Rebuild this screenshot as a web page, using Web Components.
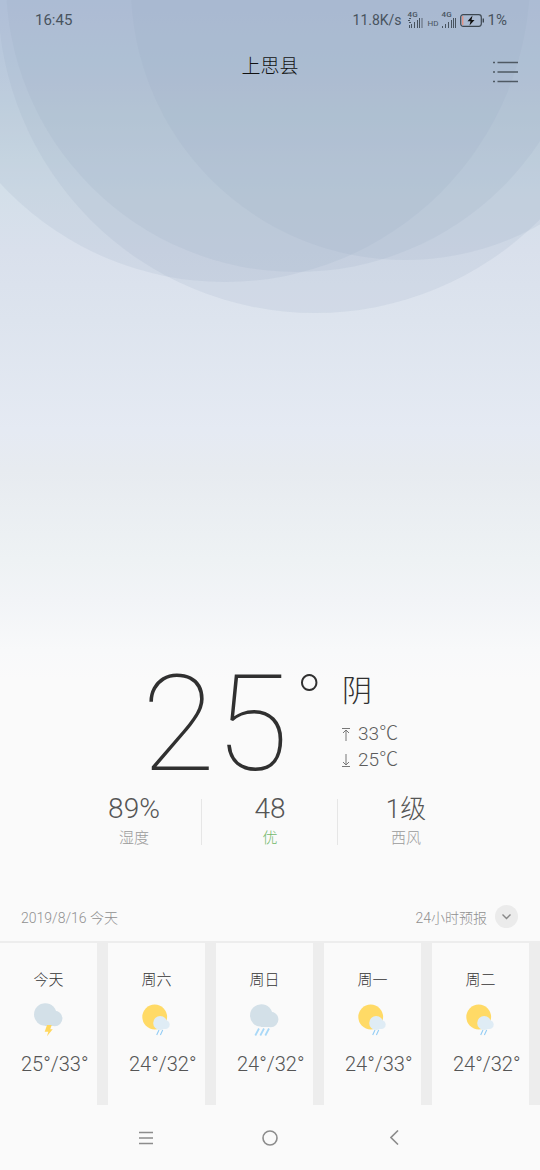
<!DOCTYPE html>
<html lang="zh-CN">
<head>
<meta charset="utf-8">
<meta name="viewport" content="width=device-width, initial-scale=1">
<title>天气</title>
<style>
  body { margin: 0; background: #fafafa; font-family: Roboto, "Noto Sans CJK SC", sans-serif; font-weight: 300; color: #333; }
</style>
</head>
<body>
<weather-app></weather-app>
<script>
const define = (name, html, render) => customElements.define(name, class extends HTMLElement {
  constructor() {
    super();
    this.attachShadow({ mode: 'open' });
  }
  connectedCallback() {
    this.shadowRoot.innerHTML = html;
    if (render) render.call(this, this.shadowRoot);
  }
});

const BUTTON = 'button{appearance:none;border:0;padding:0;margin:0;background:none;color:inherit;font:inherit;display:grid;place-items:center;cursor:pointer}svg{display:block}';

define('sky-backdrop', `
<style>
  :host { display: block; position: absolute; inset: 0; z-index: -1; overflow: hidden;
    background: linear-gradient(#bbcae1 0, #c0cfe1 60px, #c5d4e2 100px, #cedce6 160px, #d3dfe9 190px, #d9e0ec 250px, #dde4ee 320px, #e5eaf3 430px, #e7ebf0 470px, #eef2f4 560px, #f2f4f7 600px, #f8f9fa 650px, #fafafa 680px); }
  svg { display: block; width: 100%; }
</style>
<svg viewBox="0 0 540 330" fill="#98aec2" fill-opacity=".17" aria-hidden="true">
  <circle cx="225" cy="-23" r="305"/><circle cx="315" cy="-4" r="317"/>
  <circle cx="297" cy="-19" r="291"/><circle cx="405" cy="-14" r="274"/>
</svg>`);

define('status-bar', `
<style>
  :host { display: flex; justify-content: space-between; align-items: center; height: 40px; padding: 0 33px 0 35px; font-size: 15px; font-weight: 400; color: #48535e; }
  .right { display: flex; align-items: center; gap: 3px; }
  .speed { font-size: 14px; margin-right: 3px; }
  .cell { display: flex; align-items: flex-end; }
  .hd { font-size: 8px; line-height: 9px; margin: 0 3px 0 2px; }
  .sig { display: grid; justify-items: start; }
  .sig span { font-size: 8px; line-height: 6px; font-weight: 500; }
  svg { display: block; }
</style>
<span>16:45</span>
<div class="right">
  <span class="speed">11.8K/s</span>
  <div class="cell"><div class="sig"><span>4G</span>
    <svg width="15" height="10" fill="#48535e"><path d="M1 0h2v1H1zM0 2h2v1H0zM1 4h2v1H1zM1 7h1v3H1zM3 6h1v4H3zM6 4h1v6H6zM9 2h1v8H9zM11 0h1v10h-1z"/><path d="M13 0h2v10h-2z" opacity=".4"/></svg></div></div>
  <div class="cell"><span class="hd">HD</span><div class="sig"><span>4G</span>
    <svg width="15" height="10" fill="#48535e"><path d="M0 8h1v2H0zM3 6h1v4H3zM6 4h1v6H6zM9 2h1v8H9zM11 0h1v10h-1zM13 0h1v10h-1z"/></svg></div></div>
  <div class="cell">
    <svg width="25" height="13" fill="none"><rect x=".7" y=".7" width="20.6" height="11.6" rx="2.5" stroke="#3e4852" stroke-width="1.2"/><path d="M2.700 2v9" stroke="#e39488" stroke-width="1.4"/><path d="M12.500 1.500 7.500 7.200h3l-1 4.300 5-5.500h-3z" fill="#111"/><path d="M23.300 4.500v4" stroke="#3e4852" stroke-width="1.4"/></svg></div>
  <span>1%</span>
</div>`);

define('title-bar', `
<style>${BUTTON}
  :host { display: grid; grid-template-columns: 1fr auto 1fr; height: 52px; padding: 0 22px; }
  h1 { margin: 2px 0 0; align-self: center; font-size: 19px; line-height: 28px; font-weight: 300; color: #111; }
  button { grid-column: 3; justify-self: end; align-self: end; height: 40px; }
</style>
<i></i><h1><slot></slot></h1>
<button aria-label="城市列表"><svg width="25" height="22" stroke="#4f5963" stroke-width="1.4"><path d="M0 1.500h2M4.500 1.500h20.500M0 11h2M4.500 11h20.500M0 20.500h2M4.500 20.500h20.500"/></svg></button>`);

define('current-weather', `
<style>
  :host { display: flex; justify-content: center; align-items: flex-start; }
  .temp { display: flex; font-weight: 100; font-size: 134px; line-height: 136px; color: #303030; }
  .deg { font-size: 72px; line-height: 60px; margin-left: 7px; padding-top: 15px; }
  .side { margin-left: 19px; padding-top: 12px; }
  h2 { margin: 0 0 8px; font-size: 30px; line-height: 44px; font-weight: 300; color: #303030; }
  .side p { display: flex; align-items: center; gap: 8px; margin: 0; font-size: 19px; line-height: 26px; color: #5c5c5c; }
  svg { display: block; }
</style>
<div class="temp"><span>25</span><span class="deg">°</span></div>
<div class="side">
  <h2>阴</h2>
  <p><svg width="8" height="13" fill="none" stroke="#777"><path d="M0 .5h8M4 13V2M1 5l3-3 3 3"/></svg>33℃</p>
  <p><svg width="8" height="13" fill="none" stroke="#777"><path d="M0 12.500h8M4 0v11M1 8l3 3 3-3"/></svg>25℃</p>
</div>`);

define('weather-stat', `
<style>
  :host { display: block; text-align: center; }
  .v { font-size: 28px; line-height: 32px; height: 32px; color: #555; }
  ::slotted(.cjk) { font-size: 26px; }
  .l { font-size: 15px; line-height: 26px; color: var(--label, #999); }
</style>
<div class="v"><slot name="value"></slot></div><div class="l"><slot></slot></div>`);

define('stat-row', `
<style>
  :host { display: grid; grid-template-columns: repeat(3, 1fr); padding: 0 66px; }
  ::slotted(*) { background: linear-gradient(#e6e6e6, #e6e6e6) no-repeat right 6px / 1px 46px; }
  ::slotted(:last-child) { background: none; }
</style><slot></slot>`);

define('forecast-head', `
<style>${BUTTON}
  :host { display: flex; justify-content: space-between; align-items: center; height: 49px; padding: 0 22px 0 21px; font-size: 14px; color: #909090; }
  button { grid-auto-flow: column; gap: 8px; }
  .dot { display: grid; place-items: center; width: 23px; height: 23px; border-radius: 50%; background: #ebebeb; }
</style>
<span>2019/8/16 今天</span>
<button>24小时预报<span class="dot"><svg width="9" height="6" fill="none" stroke="#888" stroke-width="1.4"><path d="m.5.5 4 4 4-4"/></svg></span></button>`);

const ICONS = {
  thunder: '<g fill="#d3e0e8"><circle cx="17.300" cy="12.500" r="11.300"/><circle cx="26.700" cy="16.500" r="7.700"/><path d="M17 16h10v8H17z"/></g><path d="M19 23h4.700l-1.400 4.300h2.400L19 34.300l1.300-4.600h-3.600z" fill="#ffd75e"/>',
  sunny: '<circle cx="18.700" cy="15" r="12.400" fill="#ffda66"/><g fill="#dfecf5"><circle cx="24.200" cy="21" r="7"/><circle cx="29.300" cy="22.700" r="4.400"/><path d="M24 23h5v4h-5z"/></g><path d="m23 28-2.300 5m6-5-2.300 5" stroke="#94cdf5" stroke-width="1.100"/>',
  rain: '<g fill="#d3e0e8"><circle cx="17.300" cy="13.500" r="11.300"/><circle cx="26.700" cy="17.500" r="7.700"/><path d="M17 17h10v8H17z"/></g><path d="m15 26.500-3.700 7m8.700-7-3.700 7m8.700-7-3.700 7" stroke="#a9d8f7" stroke-width="1.800"/>'
};

define('day-card', `
<style>
  :host { display: block; background: #fafafa; padding: 26px 0 29px; }
  .day { text-align: center; font-size: 15px; line-height: 22px; color: #333; }
  svg { display: block; margin: 11px auto 15px; }
  .t { padding-left: 21px; font-size: 20px; line-height: 24px; white-space: nowrap; color: #555; }
</style>
<div class="day"><slot></slot></div>
<svg width="42" height="35" viewBox="0 0 42 35" fill="none" aria-hidden="true"></svg>
<div class="t"></div>`, function (root) {
  root.querySelector('svg').innerHTML = ICONS[this.getAttribute('icon')];
  root.querySelector('.t').textContent = this.getAttribute('temp');
});

define('day-strip', `
<style>
  :host { display: grid; grid-template-columns: repeat(5, 1fr); gap: 11px; padding: 2px 11px 0 0; background: #ededed; }
</style><slot></slot>`);

define('system-nav', `
<style>${BUTTON}
  :host { display: grid; grid-template-columns: repeat(3, 1fr); height: 65px; padding: 0 84px; background: #fafafa; }
  svg { fill: none; stroke: #8c8c8c; stroke-width: 1.6; }
</style>
<button aria-label="菜单"><svg width="14" height="14"><path d="M0 1.500h14M0 7h14M0 12.500h14"/></svg></button>
<button aria-label="主页"><svg width="16" height="16"><circle cx="8" cy="8" r="7"/></svg></button>
<button aria-label="返回"><svg width="9" height="15"><path d="m8 .5-7 7 7 7"/></svg></button>`);

define('weather-app', `
<style>
  :host { display: flex; flex-direction: column; position: relative; z-index: 0; min-height: 100vh; }
  current-weather { margin-top: auto; padding-top: 40px; }
  stat-row { margin: 0 0 41px; }
  .ok { --label: #72b86a; }
</style>
<sky-backdrop></sky-backdrop>
<status-bar></status-bar>
<title-bar>上思县</title-bar>
<current-weather></current-weather>
<stat-row>
  <weather-stat><span slot="value">89%</span>湿度</weather-stat>
  <weather-stat class="ok"><span slot="value">48</span>优</weather-stat>
  <weather-stat><span slot="value" class="cjk">1级</span>西风</weather-stat>
</stat-row>
<forecast-head></forecast-head>
<day-strip>
  <day-card icon="thunder" temp="25°/33°">今天</day-card>
  <day-card icon="sunny" temp="24°/32°">周六</day-card>
  <day-card icon="rain" temp="24°/32°">周日</day-card>
  <day-card icon="sunny" temp="24°/33°">周一</day-card>
  <day-card icon="sunny" temp="24°/32°">周二</day-card>
</day-strip>
<system-nav></system-nav>`);
</script>
</body>
</html>
